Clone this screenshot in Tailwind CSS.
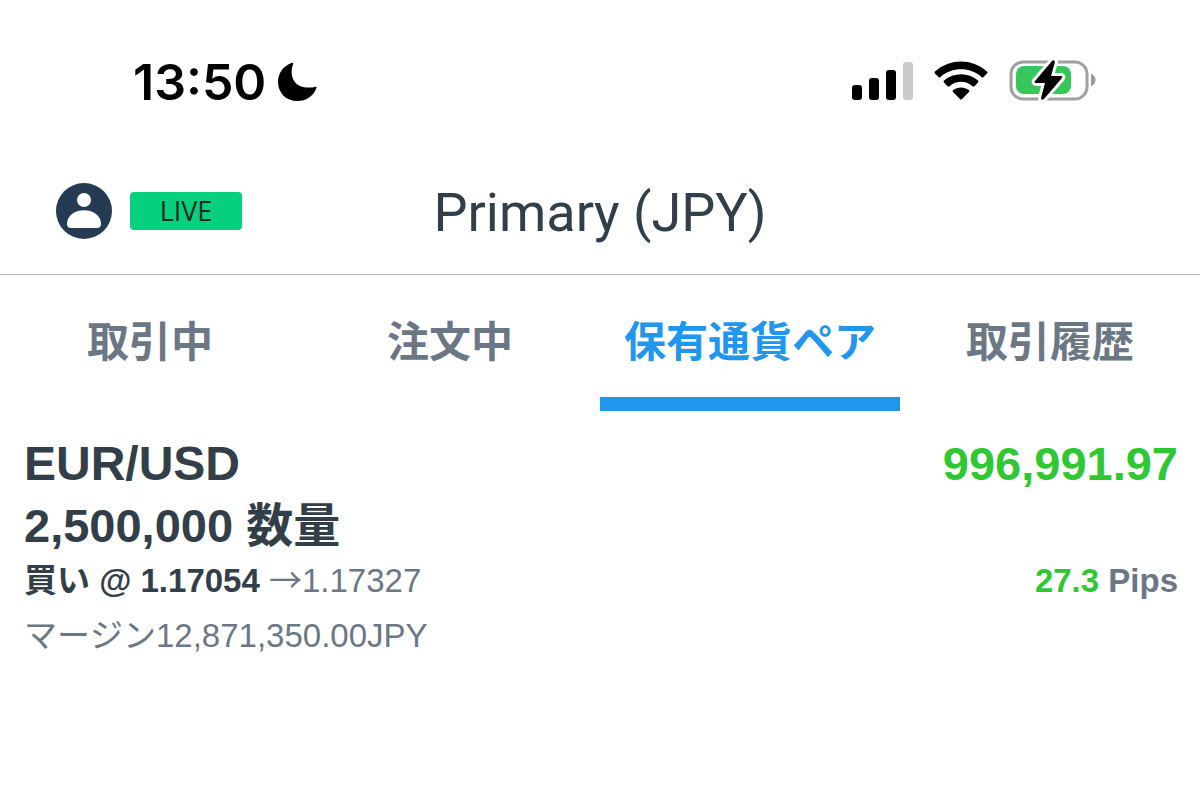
<!DOCTYPE html>
<html lang="ja">

<head>
    <meta charset="UTF-8">
    <meta name="viewport" content="width=device-width, initial-scale=1.0">
    <title>Primary (JPY)</title>
    <script src="https://cdn.jsdelivr.net/npm/@tailwindcss/browser@4"></script>
</head>

<body class="min-h-screen bg-white text-[#323e48] font-['Liberation_Sans','Noto_Sans_CJK_JP',sans-serif] [font-kerning:none]">
    <!-- Status bar -->
    <div class="flex items-center justify-between pt-[50px] pl-[133px] pr-[104px] text-black">
        <div class="flex items-center gap-3">
            <span class="font-['Inter',sans-serif] text-[50px] leading-[64px] font-semibold">13:50</span>
            <svg class="w-10 h-10" viewBox="0 0 40 40" fill="currentColor">
                <path d="M13.500 1C15 .3 15.600 1 15 2.500C11 14 16 27 33 25.500C35 25.400 37 24.500 38 24.700C38.800 25 38.500 26 38 27C35 34.500 28 39 19.500 39C8 39 0 31 0 20C0 11 5.500 3.800 13.500 1Z" />
            </svg>
        </div>
        <div class="flex items-center gap-5 pb-1">
            <svg class="w-[62px] h-10" viewBox="0 0 62 40">
                <rect x="0" y="25" width="10" height="15" rx="3" />
                <rect x="17" y="18" width="10" height="22" rx="3" />
                <rect x="34" y="10" width="10" height="30" rx="3" />
                <rect x="51" y="2" width="10" height="38" rx="3" fill="#cbcbcb" />
            </svg>
            <svg class="w-[54px] h-10" viewBox="0 0 54 40">
                <path d="M1 13.500Q0 12.500 1 11.500C16 -1.800 38 -1.800 53 11.500Q54 12.500 53 13.500L49.500 17Q48.500 18 47.500 17C36 6.800 18 6.800 6.500 17Q5.500 18 4.500 17Z" />
                <path d="M10 22.500Q9 21.500 10 20.500C20 12 34 12 44 20.500Q45 21.500 44 22.500L40.500 26.200Q39.500 27 38.500 26.200C31.500 20.300 22.500 20.300 15.500 26.200Q14.500 27 13.500 26.200Z" />
                <path d="M19 32Q18 31 19 30.200C24 26.500 30 26.500 35 30.200Q36 31 35 32L28 39Q27 40 26 39Z" />
            </svg>
            <svg class="w-[88px] h-[44px]" viewBox="0 0 88 44">
                <rect x="3" y="4" width="76" height="37" rx="12" fill="none" stroke="#a0a0a0" stroke-width="3" />
                <rect x="8" y="8" width="55" height="28" rx="8" fill="#35c759" />
                <path d="M83 16C89 17 89 27 83 28Z" fill="#999" />
                <path d="M44 3L27 23Q26 25 28 25H37L33 40Q33 43 36 41L54 20Q55 18 53 18H43L47 4Q46 1 44 3Z" fill="#000" stroke="#fff" stroke-width="6" stroke-linejoin="round" paint-order="stroke" />
            </svg>
        </div>
    </div>

    <!-- Account header -->
    <header class="grid grid-cols-[1fr_auto_1fr] items-center pt-[68px] pb-[34px] px-14 border-b border-[#b4b4b6]">
        <div class="flex items-center gap-[18px]">
            <button type="button" aria-label="Account">
                <svg class="block w-14 h-14" viewBox="0 0 56 56">
                    <circle cx="28" cy="28" r="28" fill="#243b53" />
                    <circle cx="28" cy="17" r="7" fill="#fff" />
                    <path d="M11 41C11 22.500 45 22.500 45 41Q45 45 41 45H15Q11 45 11 41Z" fill="#fff" />
                </svg>
            </button>
            <span class="w-28 rounded bg-[#06cf7d] text-center font-['Open_Sans',sans-serif] text-[27px] leading-[38px] text-[#0b2b22]">LIVE</span>
        </div>
        <h1 class="pt-1 font-['Roboto',sans-serif] text-[54px] leading-[54px]">Primary (JPY)</h1>
    </header>

    <!-- Tabs -->
    <nav class="grid grid-cols-4 text-center text-[42px] leading-[60px] font-bold text-[#6b7785]">
        <a href="#" class="border-b-14 border-transparent pt-[38px] pb-6">取引中</a>
        <a href="#" class="border-b-14 border-transparent pt-[38px] pb-6">注文中</a>
        <a href="#" aria-current="page" class="border-b-14 border-[#2196ee] pt-[38px] pb-6 text-[#2196ee]">保有通貨ペア</a>
        <a href="#" class="border-b-14 border-transparent pt-[38px] pb-6">取引履歴</a>
    </nav>

    <!-- Position -->
    <main class="pl-6 pr-[22px] pt-[22px]">
        <div class="flex justify-between text-[48px] leading-[62px] font-bold">
            <h2>EUR/USD</h2>
            <span class="text-[47px] text-[#2fc832]">996,991.97</span>
        </div>
        <p class="text-[47px] leading-[62px] font-bold">2,500,000 数量</p>
        <div class="flex justify-between text-[33px] leading-[48px] text-[#6b7785]">
            <p><b class="text-[#323e48]">買い @ 1.17054</b> <span class="font-['Noto_Sans_CJK_JP',sans-serif] leading-none">→</span>1.17327</p>
            <p class="font-bold"><span class="text-[#2fc832]">27.3</span> Pips</p>
        </div>
        <p class="text-[33px] leading-[62px] text-[#6b7785]">マージン12,871,350.00JPY</p>
    </main>
</body>

</html>
